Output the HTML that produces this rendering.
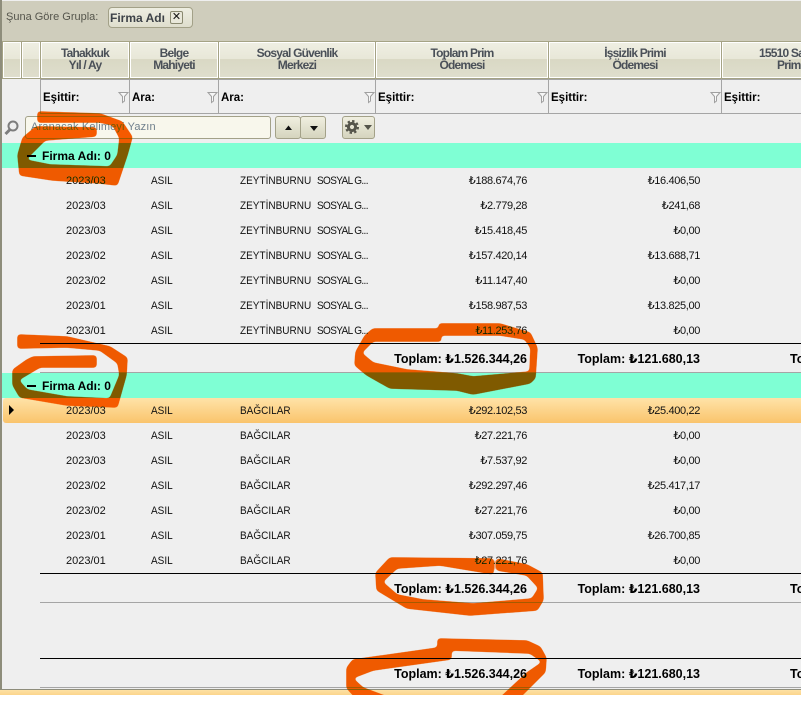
<!DOCTYPE html>
<html lang="tr"><head><meta charset="utf-8"><title>Grid</title>
<style>
html,body{margin:0;padding:0;background:#fff}
#p{position:relative;width:801px;height:711px;overflow:hidden;background:#fff;font:11px "Liberation Sans","DejaVu Sans",sans-serif;color:#111}
#p div,#p span{position:absolute;white-space:nowrap}
#p div.h{top:41px;height:38px;box-sizing:border-box;border:1px solid #a5a385;box-shadow:inset 0 0 0 1px #fff;background:linear-gradient(#efefe3 0,#e8e7d8 47%,#d9d8c4 48%,#dfdecd 100%);text-align:center;font-weight:bold;font-size:12px;letter-spacing:-.8px;line-height:12px;color:#4a5058;padding-top:5px;white-space:normal}
.fs{top:80px;width:1px;height:33px;background:#a5a5a5}
.f{top:91px;font-weight:bold;font-size:11.5px;line-height:14px;color:#000}
.r{left:2px;width:799px;height:25px;line-height:26px}
.a{left:64px}
.b,.c,.c2{transform:scaleX(.91);transform-origin:0 50%}
.b{left:149px}.c{left:238px}.c2{left:315px;letter-spacing:-.7px}
.d{right:274px;letter-spacing:-.35px}.e{right:101px;letter-spacing:-.35px}
.g{left:2px;width:799px;height:25px;background:#7fffd4}
.g b{position:absolute;left:25px;top:12px;width:9px;height:2px;background:#000}
.g i{position:absolute;left:40px;top:0;line-height:27px;font-style:normal;font-weight:bold;font-size:12px;color:#000}
.t{font-weight:bold;font-size:12.5px;line-height:16px;color:#000}
.k{left:40px;right:0;height:1px}
.bt{top:116px;height:23px;box-sizing:border-box;border:1px solid #a3a188;border-radius:3px;background:linear-gradient(#f0efe0,#d5d4be)}
</style></head><body><div id="p">
<div style="left:0;top:0;width:801px;height:690px;background:#efefef"></div>
<div style="left:2px;top:1px;width:799px;height:40px;background:#cfcdbc"></div>
<div style="left:0;top:0;width:2px;height:690px;background:#8e8d7b"></div>
<div style="left:0;top:689px;width:801px;height:1px;background:#8e8d7b"></div>
<div style="left:0;top:690px;width:801px;height:5px;background:linear-gradient(#fde1a5,#fbd48c)"></div>
<div style="left:6px;top:10px;font-size:11px;line-height:14px;color:#55554c">Şuna Göre Grupla:</div>
<div style="left:108px;top:7px;width:85px;height:21px;box-sizing:border-box;border:1px solid #a3a188;border-radius:4px;background:linear-gradient(#eeeee2,#dfdecd)"></div>
<div style="left:110px;top:11px;width:55px;overflow:hidden;font-weight:bold;font-size:12px;line-height:14px;color:#3d4248">Firma Adı</div>
<div style="left:170px;top:11px;width:13px;height:13px;box-sizing:border-box;border:1px solid #8a8970;border-radius:2px;background:#e9e8da;text-align:center;font-weight:bold;font-size:11px;line-height:11px;color:#111">✕</div>
<div class="h" style="left:2px;width:20px"></div>
<div class="h" style="left:21px;width:20px"></div>
<div class="h" style="left:40px;width:90px">Tahakkuk<br>Yıl / Ay</div>
<div class="h" style="left:129px;width:90px">Belge<br>Mahiyeti</div>
<div class="h" style="left:218px;width:158px">Sosyal Güvenlik<br>Merkezi</div>
<div class="h" style="left:375px;width:174px">Toplam Prim<br>Ödemesi</div>
<div class="h" style="left:548px;width:174px">İşsizlik Primi<br>Ödemesi</div>
<div class="h" style="left:721px;width:174px"><span style="left:37px;top:5px">15510 Sayılı</span><span style="left:55px;top:17px">Prim</span></div>
<div style="left:40px;top:79px;width:761px;height:1px;background:#a5a5a5"></div>
<div style="left:40px;top:113px;width:761px;height:1px;background:#a5a5a5"></div>
<div class="fs" style="left:40px"></div><div class="fs" style="left:129px"></div><div class="fs" style="left:218px"></div><div class="fs" style="left:375px"></div><div class="fs" style="left:548px"></div><div class="fs" style="left:721px"></div>
<div class="f" style="left:43px">Eşittir:</div><div class="f" style="left:132px">Ara:</div><div class="f" style="left:221px">Ara:</div><div class="f" style="left:378px">Eşittir:</div><div class="f" style="left:551px">Eşittir:</div><div class="f" style="left:724px">Eşittir:</div>
<svg style="position:absolute;left:0;top:0" width="801" height="140" fill="#f7f7f7" stroke="#a0a0a0">
<path d="M119 92.500h9l-3.500 4v4.500l-2 1.500v-6z"/><path d="M208 92.500h9l-3.500 4v4.500l-2 1.500v-6z"/><path d="M365 92.500h9l-3.500 4v4.500l-2 1.500v-6z"/><path d="M538 92.500h9l-3.500 4v4.500l-2 1.500v-6z"/><path d="M711 92.500h9l-3.500 4v4.500l-2 1.500v-6z"/>
<circle cx="13" cy="126" r="4.500" fill="none" stroke="#7d7d7d" stroke-width="2"/><path d="M10 129.500L5.500 134" fill="none" stroke="#7d7d7d" stroke-width="3"/>
</svg>
<div style="left:25px;top:116px;width:246px;height:23px;box-sizing:border-box;border:1px solid #a3a188;border-radius:3px;background:#f8f7ec;padding-left:5px;font-size:11px;line-height:21px;color:#6f7f8c;letter-spacing:.15px">Aranacak Kelimeyi Yazın</div>
<div class="bt" style="left:275px;width:26px"></div><div class="bt" style="left:300px;width:26px"></div><div class="bt" style="left:342px;width:33px"></div>
<svg style="position:absolute;left:0;top:110px" width="801" height="35"><path d="M285 20l3.500-4.500 3.500 4.500zM310 16h8l-4 5z" fill="#111"/>
<circle cx="352" cy="17" r="3.600" fill="none" stroke="#54544a" stroke-width="3"/><circle cx="352" cy="17" r="6" fill="none" stroke="#54544a" stroke-width="2" stroke-dasharray="2.400 2.300"/><path d="M364 15h8l-4 5z" fill="#54544a"/></svg>

<div class="g" style="top:143px"><b></b><i>Firma Adı: 0</i></div>
<div class="r" style="top:168px"><span class="a">2023/03</span><span class="b">ASIL</span><span class="c">ZEYTİNBURNU</span><span class="c2">SOSYAL G...</span><span class="d">₺188.674,76</span><span class="e">₺16.406,50</span></div>
<div class="r" style="top:193px"><span class="a">2023/03</span><span class="b">ASIL</span><span class="c">ZEYTİNBURNU</span><span class="c2">SOSYAL G...</span><span class="d">₺2.779,28</span><span class="e">₺241,68</span></div>
<div class="r" style="top:218px"><span class="a">2023/03</span><span class="b">ASIL</span><span class="c">ZEYTİNBURNU</span><span class="c2">SOSYAL G...</span><span class="d">₺15.418,45</span><span class="e">₺0,00</span></div>
<div class="r" style="top:243px"><span class="a">2023/02</span><span class="b">ASIL</span><span class="c">ZEYTİNBURNU</span><span class="c2">SOSYAL G...</span><span class="d">₺157.420,14</span><span class="e">₺13.688,71</span></div>
<div class="r" style="top:268px"><span class="a">2023/02</span><span class="b">ASIL</span><span class="c">ZEYTİNBURNU</span><span class="c2">SOSYAL G...</span><span class="d">₺11.147,40</span><span class="e">₺0,00</span></div>
<div class="r" style="top:293px"><span class="a">2023/01</span><span class="b">ASIL</span><span class="c">ZEYTİNBURNU</span><span class="c2">SOSYAL G...</span><span class="d">₺158.987,53</span><span class="e">₺13.825,00</span></div>
<div class="r" style="top:318px"><span class="a">2023/01</span><span class="b">ASIL</span><span class="c">ZEYTİNBURNU</span><span class="c2">SOSYAL G...</span><span class="d">₺11.253,76</span><span class="e">₺0,00</span></div>
<div class="k" style="top:343px;background:#000"></div>
<div class="t" style="top:351px;right:274px">Toplam: ₺1.526.344,26</div><div class="t" style="top:351px;right:101px">Toplam: ₺121.680,13</div><div class="t" style="top:351px;left:790px">Toplam</div>
<div class="k" style="top:372px;background:#a5a5a5"></div>

<div class="g" style="top:373px"><b></b><i>Firma Adı: 0</i></div>
<div style="left:3px;top:398px;width:798px;height:25px;border-radius:3px 0 0 3px;background:linear-gradient(#ffe3a8,#fac46c)"></div>
<svg style="position:absolute;left:0;top:398px" width="20" height="25"><path d="M9 7l5 5-5 5z" fill="#000"/></svg>
<div class="r" style="top:398px"><span class="a">2023/03</span><span class="b">ASIL</span><span class="c">BAĞCILAR</span><span class="d">₺292.102,53</span><span class="e">₺25.400,22</span></div>
<div class="r" style="top:423px"><span class="a">2023/03</span><span class="b">ASIL</span><span class="c">BAĞCILAR</span><span class="d">₺27.221,76</span><span class="e">₺0,00</span></div>
<div class="r" style="top:448px"><span class="a">2023/03</span><span class="b">ASIL</span><span class="c">BAĞCILAR</span><span class="d">₺7.537,92</span><span class="e">₺0,00</span></div>
<div class="r" style="top:473px"><span class="a">2023/02</span><span class="b">ASIL</span><span class="c">BAĞCILAR</span><span class="d">₺292.297,46</span><span class="e">₺25.417,17</span></div>
<div class="r" style="top:498px"><span class="a">2023/02</span><span class="b">ASIL</span><span class="c">BAĞCILAR</span><span class="d">₺27.221,76</span><span class="e">₺0,00</span></div>
<div class="r" style="top:523px"><span class="a">2023/01</span><span class="b">ASIL</span><span class="c">BAĞCILAR</span><span class="d">₺307.059,75</span><span class="e">₺26.700,85</span></div>
<div class="r" style="top:548px"><span class="a">2023/01</span><span class="b">ASIL</span><span class="c">BAĞCILAR</span><span class="d">₺27.221,76</span><span class="e">₺0,00</span></div>
<div class="k" style="top:573px;background:#000"></div>
<div class="t" style="top:581px;right:274px">Toplam: ₺1.526.344,26</div><div class="t" style="top:581px;right:101px">Toplam: ₺121.680,13</div><div class="t" style="top:581px;left:790px">Toplam</div>
<div class="k" style="top:602px;background:#a5a5a5"></div>
<div class="k" style="top:658px;background:#000"></div>
<div class="t" style="top:666px;right:274px">Toplam: ₺1.526.344,26</div><div class="t" style="top:666px;right:101px">Toplam: ₺121.680,13</div><div class="t" style="top:666px;left:790px">Toplam</div>
<div class="k" style="top:687px;background:#a5a5a5"></div>

<svg style="position:absolute;left:0;top:0;mix-blend-mode:darken" width="801" height="695">
<filter id="sm" x="0" y="0" width="801" height="720" filterUnits="userSpaceOnUse" color-interpolation-filters="sRGB"><feGaussianBlur stdDeviation="1.800"/><feComponentTransfer><feFuncA type="linear" slope="7" intercept="-3"/></feComponentTransfer></filter>
<g filter="url(#sm)" fill="#f55a00" stroke="#f55a00" stroke-width="1.500" stroke-linejoin="round">
<path d="M38 112L100 114L122 122L132 137L127 155L117 185L100 183L53 180L20 175L18 155L23 138L36 127L96 128L96 136L45 140L25 160L50 165L110 167L118 155L120 138L113 125L100 122L38 122Z"/>
<path d="M18 335L67 337L110 347L127 358L126 375L117 407L67 405L20 397L13 385L13 370L27 360L33 357L96 356L96 367L40 367L18 380L27 390L67 397L110 399L120 375L118 363L100 350L67 347L18 348Z"/>
<path d="M439 324L500 324L530 333L537 348L535 378L530 383L473 394L457 390L390 388L367 375L355 365L356 352L365 336L373 329L439 329L441 341L373 341L361 353L373 363L407 370L457 374L473 377L530 372L531 348L525 339L500 335L441 335Z"/>
<path d="M493 559L390 558L376 573L377 590L407 608L470 615L537 610L543 600L542 573L527 565L497 559L497 570L527 575L539 588L532 599L473 604L423 600L397 595L382 582L397 568L440 565L488 573L493 574Z"/>
<path d="M438 639L527 641L540 647L546 658L545 672L517 700L498 700L527 673L543 662L530 653L451 650L451 659L373 670L352 678L363 688L395 700L358 700L347 688L347 668L353 660L438 648Z"/>
</g></svg>
</div></body></html>
